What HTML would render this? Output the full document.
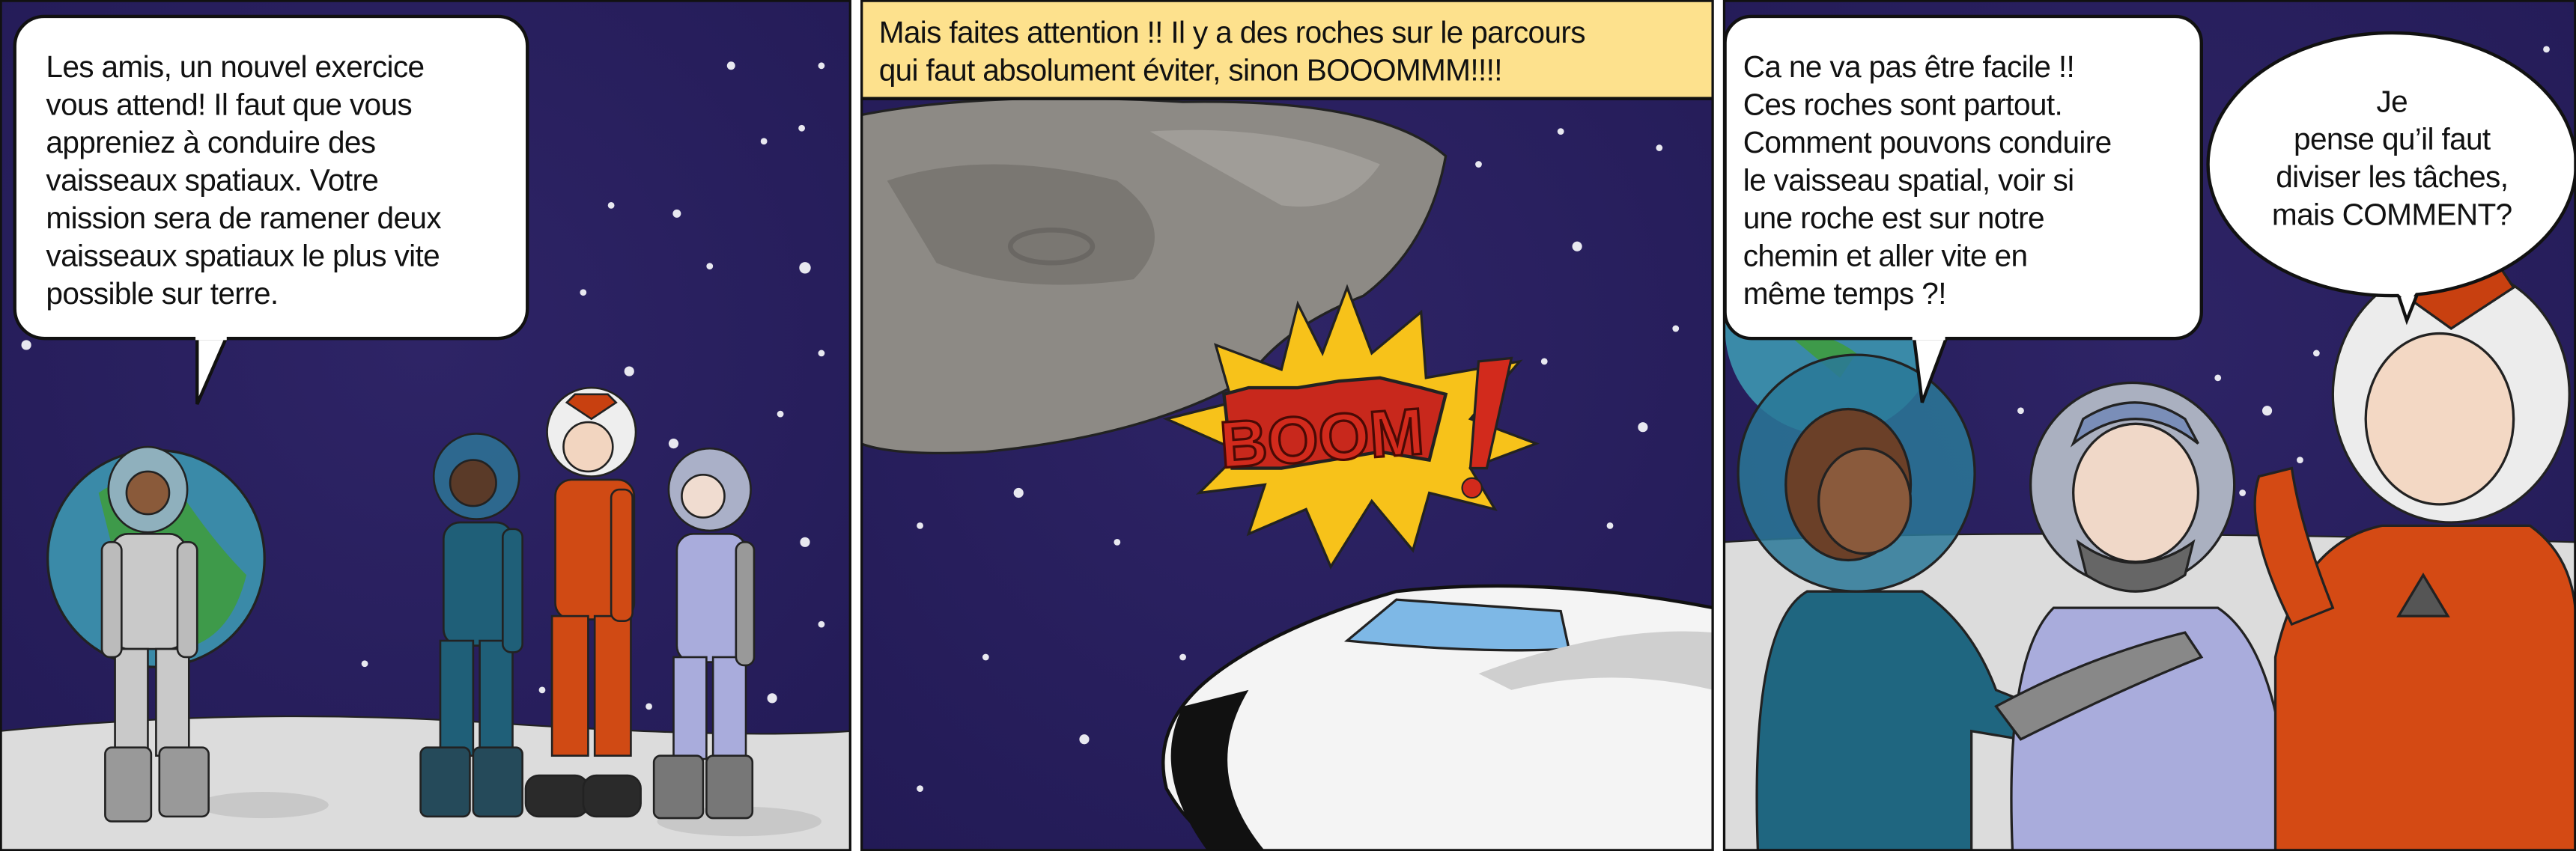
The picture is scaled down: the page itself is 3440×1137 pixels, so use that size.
<!DOCTYPE html>
<html><head><meta charset="utf-8">
<style>
html,body{margin:0;padding:0;background:#fff;}
#wrap{width:1568px;height:518px;transform:scale(2.19388,2.19498);transform-origin:0 0;position:relative;overflow:hidden;}
svg{position:absolute;left:0;top:0;}
.t{position:absolute;font-family:"Liberation Sans",sans-serif;font-size:18.5px;line-height:23px;color:#111;letter-spacing:-0.3px;}
</style></head><body>
<div id="wrap">
<svg width="1568" height="518" viewBox="0 0 1568 518">
<defs>
<radialGradient id="sp" cx="50%" cy="40%" r="80%"><stop offset="0" stop-color="#2e2466"/><stop offset="1" stop-color="#221a55"/></radialGradient>
<clipPath id="c1"><rect x="0" y="0" width="518" height="518"/></clipPath>
<clipPath id="c2"><rect x="524" y="0" width="519" height="518"/></clipPath>
<clipPath id="c3"><rect x="1049" y="0" width="519" height="518"/></clipPath>
</defs>
<rect width="1568" height="518" fill="#fff"/>
<!-- panel 1 -->
<g clip-path="url(#c1)">
<rect x="0" y="0" width="518" height="518" fill="url(#sp)"/>
<g fill="#e8e8f0">
<circle cx="372" cy="125" r="2"/><circle cx="412" cy="130" r="2.5"/><circle cx="383" cy="226" r="3"/><circle cx="450" cy="295" r="3.5"/><circle cx="475" cy="252" r="2"/><circle cx="432" cy="162" r="2"/><circle cx="490" cy="163" r="3.5"/><circle cx="500" cy="215" r="2"/><circle cx="410" cy="270" r="3"/><circle cx="465" cy="86" r="2"/><circle cx="488" cy="78" r="2"/><circle cx="420" cy="360" r="3.5"/><circle cx="378" cy="358" r="3"/><circle cx="355" cy="178" r="2"/><circle cx="15" cy="470" r="3"/><circle cx="170" cy="485" r="2"/><circle cx="230" cy="470" r="3"/><circle cx="500" cy="380" r="2"/><circle cx="470" cy="425" r="3"/><circle cx="440" cy="420" r="2"/><circle cx="58" cy="515" r="3"/><circle cx="490" cy="330" r="3"/><circle cx="395" cy="430" r="2"/><circle cx="222" cy="404" r="2"/><circle cx="300" cy="480" r="2"/><circle cx="350" cy="440" r="3"/><circle cx="16" cy="210" r="3"/><circle cx="330" cy="420" r="2"/><circle cx="500" cy="40" r="2"/><circle cx="445" cy="40" r="2.5"/></g>
<!-- ground -->
<path d="M0 445 Q150 430 300 440 T518 445 V518 H0Z" fill="#dcdcdc" stroke="#222" stroke-width="1"/>
<ellipse cx="160" cy="490" rx="40" ry="8" fill="#c8c8c8"/><ellipse cx="450" cy="500" rx="50" ry="9" fill="#c8c8c8"/>
<!-- earth -->
<circle cx="95" cy="340" r="66" fill="#3a8aa8" stroke="#222" stroke-width="1.5"/>
<path d="M60 300 Q90 280 110 300 Q130 330 150 350 Q140 390 110 395 Q80 370 70 340Z" fill="#3e9a4a"/>
<!-- figure 1 grey -->
<g stroke="#222" stroke-width="1.2">
<ellipse cx="90" cy="298" rx="24" ry="26" fill="#8fb0bd"/>
<circle cx="90" cy="300" r="13" fill="#8a5a3a"/>
<rect x="68" y="325" width="45" height="70" rx="10" fill="#c9c9c9"/>
<rect x="70" y="395" width="20" height="65" fill="#c9c9c9"/><rect x="95" y="395" width="20" height="65" fill="#c9c9c9"/>
<rect x="64" y="455" width="28" height="45" rx="4" fill="#999"/><rect x="97" y="455" width="30" height="42" rx="4" fill="#999"/>
<rect x="62" y="330" width="12" height="70" rx="5" fill="#bbb"/><rect x="108" y="330" width="12" height="70" rx="5" fill="#bbb"/>
</g>
<!-- figure 2 teal -->
<g stroke="#222" stroke-width="1.2">
<circle cx="290" cy="290" r="26" fill="#2e7a9a" fill-opacity="0.8"/>
<circle cx="288" cy="294" r="14" fill="#5a3a28"/>
<rect x="270" y="318" width="42" height="75" rx="10" fill="#1f5f78"/>
<rect x="268" y="390" width="20" height="70" fill="#1f5f78"/><rect x="292" y="390" width="20" height="70" fill="#1f5f78"/>
<rect x="256" y="455" width="30" height="42" rx="4" fill="#254a5a"/><rect x="288" y="455" width="30" height="42" rx="4" fill="#254a5a"/>
<rect x="306" y="322" width="12" height="75" rx="5" fill="#1f5f78"/>
</g>
<!-- figure 3 orange -->
<g stroke="#222" stroke-width="1.2">
<circle cx="360" cy="263" r="27" fill="#eee"/>
<circle cx="358" cy="272" r="15" fill="#f2d5c0"/>
<path d="M345 245 L360 255 L375 245 L370 240 H350Z" fill="#c84010"/>
<rect x="338" y="292" width="48" height="85" rx="10" fill="#d04a14"/>
<rect x="336" y="375" width="22" height="85" fill="#d04a14"/><rect x="362" y="375" width="22" height="85" fill="#d04a14"/>
<rect x="320" y="472" width="38" height="25" rx="8" fill="#2a2a2a"/><rect x="355" y="472" width="35" height="25" rx="8" fill="#2a2a2a"/>
<rect x="372" y="298" width="13" height="80" rx="5" fill="#d04a14"/>
</g>
<!-- figure 4 lavender -->
<g stroke="#222" stroke-width="1.2">
<circle cx="432" cy="298" r="25" fill="#aab0c8"/>
<circle cx="428" cy="302" r="13" fill="#f0dcd0"/>
<rect x="412" y="325" width="42" height="78" rx="10" fill="#a9acdc"/>
<rect x="410" y="400" width="20" height="62" fill="#a9acdc"/><rect x="434" y="400" width="20" height="62" fill="#a9acdc"/>
<rect x="398" y="460" width="30" height="38" rx="4" fill="#777"/><rect x="430" y="460" width="28" height="38" rx="4" fill="#777"/>
<rect x="448" y="330" width="11" height="75" rx="5" fill="#999"/>
</g>
<!-- bubble -->
<path d="M120 205 L138 205 L120 246Z" fill="#fff" stroke="#111" stroke-width="2"/>
<rect x="9" y="10" width="312" height="196" rx="18" fill="#fff" stroke="#111" stroke-width="2"/>
<rect x="119" y="203" width="19" height="4" fill="#fff"/>
</g>
<!-- panel 2 -->
<g clip-path="url(#c2)">
<rect x="524" y="0" width="519" height="518" fill="url(#sp)"/>
<g fill="#e8e8f0"><circle cx="900" cy="100" r="2"/><circle cx="960" cy="150" r="3"/><circle cx="1010" cy="90" r="2"/><circle cx="940" cy="220" r="2"/><circle cx="1000" cy="260" r="3"/><circle cx="560" cy="320" r="2"/><circle cx="620" cy="300" r="3"/><circle cx="680" cy="330" r="2"/><circle cx="600" cy="400" r="2"/><circle cx="660" cy="450" r="3"/><circle cx="560" cy="480" r="2"/><circle cx="1020" cy="200" r="2"/><circle cx="980" cy="320" r="2"/><circle cx="720" cy="400" r="2"/><circle cx="900" cy="300" r="2.5"/><circle cx="950" cy="80" r="2"/></g>
<!-- asteroid -->
<path d="M524 70 Q600 55 720 62 Q840 60 880 95 Q870 150 830 180 Q780 200 760 230 Q700 265 600 275 Q545 278 524 270Z" fill="#8d8a85" stroke="#222" stroke-width="1.5"/>
<path d="M540 110 Q600 90 680 110 Q720 140 690 170 Q620 180 570 160Z" fill="#7a7772"/>
<ellipse cx="640" cy="150" rx="25" ry="10" fill="none" stroke="#6a6763" stroke-width="3"/>
<path d="M700 80 Q780 75 840 100 Q820 130 780 125Z" fill="#a09d98"/>
<!-- boom -->
<path d="M820 175 L835 215 L865 190 L868 230 L925 220 L895 255 L935 270 L895 285 L910 310 L870 300 L860 335 L835 305 L810 345 L795 310 L760 325 L770 295 L730 300 L755 275 L710 255 L750 245 L740 210 L780 225 L790 185 L805 215Z" fill="#f7c21a" stroke="#222" stroke-width="1.5"/>
<path d="M745 240 L760 236 L790 236 L815 232 L840 230 L865 236 L880 240 L870 280 L840 275 L810 280 L780 285 L750 285Z" fill="#c8281c" stroke="#222" stroke-width="2"/>
<text x="742" y="280" font-family="Liberation Sans,sans-serif" font-weight="bold" font-size="40" fill="#d22a1c" stroke="#4a0a05" stroke-width="1.5" transform="rotate(-4 810 260)">BOOM</text>
<path d="M900 220 L920 218 L905 285 L895 285Z" fill="#d22a1c" stroke="#222" stroke-width="1.5"/><circle cx="896" cy="297" r="6" fill="#d22a1c" stroke="#222"/>
<!-- ship -->
<path d="M1043 370 Q940 350 850 360 Q780 380 740 410 Q700 440 710 480 Q730 515 760 518 H1043Z" fill="#f4f4f4" stroke="#111" stroke-width="2"/>
<path d="M720 430 Q700 470 735 518 H770 Q730 470 760 420Z" fill="#111"/>
<path d="M820 390 L850 365 L950 372 L955 395 Q900 398 820 390Z" fill="#7eb8e6" stroke="#222" stroke-width="1.5"/>
<path d="M900 410 Q980 380 1043 385 V420 Q980 405 920 420Z" fill="#cfcfcf"/>
<!-- caption -->
<rect x="524" y="0" width="519" height="60" fill="#fde18d" stroke="#111" stroke-width="2"/>
</g>
<!-- panel 3 -->
<g clip-path="url(#c3)">
<rect x="1049" y="0" width="519" height="518" fill="url(#sp)"/>
<g fill="#e8e8f0"><circle cx="1350" cy="230" r="2"/><circle cx="1380" cy="250" r="3"/><circle cx="1410" cy="215" r="2"/><circle cx="1365" cy="300" r="2"/><circle cx="1230" cy="250" r="2"/><circle cx="1550" cy="30" r="2"/><circle cx="1520" cy="180" r="2"/><circle cx="1400" cy="280" r="2"/><circle cx="1240" cy="300" r="3"/></g>
<circle cx="1115" cy="200" r="65" fill="#3a8aa8"/><path d="M1090 205 Q1110 200 1130 215 L1120 230Z" fill="#3e9a4a"/>
<path d="M1049 330 Q1200 320 1568 330 V518 H1049Z" fill="#dcdcdc" stroke="#222"/>
<!-- teal -->
<g stroke="#222" stroke-width="1.5">
<path d="M1070 518 Q1065 380 1100 360 L1170 360 Q1200 380 1215 420 L1240 430 L1230 450 L1200 445 L1200 518Z" fill="#1f6680"/>
<circle cx="1130" cy="288" r="72" fill="#2a7898" fill-opacity="0.85"/>
<ellipse cx="1125" cy="295" rx="38" ry="46" fill="#6b4028"/>
<ellipse cx="1135" cy="305" rx="28" ry="32" fill="#8a5a3c"/>
</g>
<!-- lavender -->
<g stroke="#222" stroke-width="1.5">
<path d="M1225 518 Q1220 400 1250 370 L1350 370 Q1380 390 1390 460 L1385 518Z" fill="#a9acdc"/>
<circle cx="1298" cy="295" r="62" fill="#aab0c0"/>
<ellipse cx="1300" cy="300" rx="38" ry="42" fill="#f0d8c8"/>
<path d="M1262 270 Q1300 240 1338 270 L1330 255 Q1300 235 1268 255Z" fill="#7a8eb8"/>
<path d="M1265 330 Q1300 355 1335 330 L1330 350 Q1300 370 1270 350Z" fill="#666"/>
<path d="M1215 430 Q1270 400 1330 385 L1340 400 Q1290 420 1230 450Z" fill="#888"/>
</g>
<!-- orange -->
<g stroke="#222" stroke-width="1.5">
<path d="M1385 518 V400 Q1400 330 1450 320 L1540 320 Q1568 340 1568 380 V518Z" fill="#d44a14"/>
<path d="M1375 290 Q1365 320 1395 380 L1420 370 Q1400 320 1395 285Z" fill="#d44a14"/>
<ellipse cx="1492" cy="240" rx="72" ry="78" fill="#ececec"/>
<ellipse cx="1485" cy="255" rx="45" ry="52" fill="#f3d8c4"/>
<path d="M1450 170 L1492 200 L1530 175 L1520 160 H1460Z" fill="#c84010"/>
<path d="M1460 375 L1475 350 L1490 375Z" fill="#555"/>
</g>
<!-- bubbles -->
<path d="M1165 205 L1185 205 L1170 245Z" fill="#fff" stroke="#111" stroke-width="2"/>
<rect x="1050" y="10" width="290" height="196" rx="16" fill="#fff" stroke="#111" stroke-width="2"/>
<rect x="1164" y="203" width="20" height="4" fill="#fff"/>
<path d="M1455 165 L1475 170 L1465 195Z" fill="#fff" stroke="#111" stroke-width="2"/>
<ellipse cx="1456" cy="100" rx="112" ry="80" fill="#fff" stroke="#111" stroke-width="2"/>
<path d="M1456 175 L1472 176 L1466 185Z" fill="#fff"/>
</g>
<!-- panel borders -->
<rect x="0.5" y="0.5" width="517" height="517" fill="none" stroke="#111" stroke-width="1.5"/>
<rect x="524.5" y="0.5" width="518" height="517" fill="none" stroke="#111" stroke-width="1.5"/>
<rect x="1049.5" y="0.5" width="518" height="517" fill="none" stroke="#111" stroke-width="1.5"/>
</svg>
<div class="t" style="left:28px;top:29px;width:290px;">Les amis, un nouvel exercice<br>vous attend! Il faut que vous<br>appreniez à conduire des<br>vaisseaux spatiaux. Votre<br>mission sera de ramener deux<br>vaisseaux spatiaux le plus vite<br>possible sur terre.</div>
<div class="t" style="left:535px;top:8px;width:505px;">Mais faites attention !! Il y a des roches sur le parcours<br>qui faut absolument éviter, sinon BOOOMMM!!!!</div>
<div class="t" style="left:1061px;top:29px;width:280px;">Ca ne va pas être facile !!<br>Ces roches sont partout.<br>Comment pouvons conduire<br>le vaisseau spatial, voir si<br>une roche est sur notre<br>chemin et aller vite en<br>même temps ?!</div>
<div class="t" style="left:1346px;top:50px;width:220px;text-align:center;">Je<br>pense qu’il faut<br>diviser les tâches,<br>mais COMMENT?</div>
</div>
</body></html>
